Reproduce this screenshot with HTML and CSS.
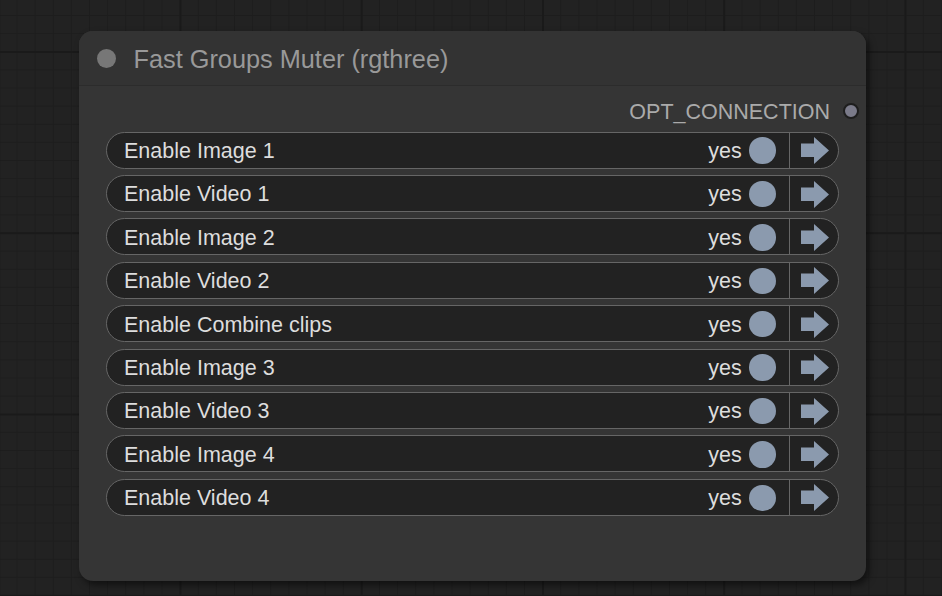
FILE: index.html
```html
<!DOCTYPE html>
<html>
<head>
<meta charset="utf-8">
<link rel="stylesheet" href="styles.css">
</head>
<body>
<div class="canvas">
  <div class="node">
    <div class="title">
      <span class="title-dot"></span>
      <span class="title-text">Fast Groups Muter (rgthree)</span>
    </div>
    <div class="output-row">
      <span class="output-label">OPT_CONNECTION</span>
      <span class="output-dot"></span>
    </div>
    <div class="rows">
      <div class="row"><span class="label">Enable Image 1</span><span class="value">yes</span><span class="toggle"></span><span class="divider"></span><span class="arrow-cell"><svg class="arrow" width="28" height="27" viewBox="0 0 28 27"><polygon points="0,6.5 13,6.5 13,0 28,13.5 13,27 13,20 0,20"/></svg></span></div>
      <div class="row"><span class="label">Enable Video 1</span><span class="value">yes</span><span class="toggle"></span><span class="divider"></span><span class="arrow-cell"><svg class="arrow" width="28" height="27" viewBox="0 0 28 27"><polygon points="0,6.5 13,6.5 13,0 28,13.5 13,27 13,20 0,20"/></svg></span></div>
      <div class="row"><span class="label">Enable Image 2</span><span class="value">yes</span><span class="toggle"></span><span class="divider"></span><span class="arrow-cell"><svg class="arrow" width="28" height="27" viewBox="0 0 28 27"><polygon points="0,6.5 13,6.5 13,0 28,13.5 13,27 13,20 0,20"/></svg></span></div>
      <div class="row"><span class="label">Enable Video 2</span><span class="value">yes</span><span class="toggle"></span><span class="divider"></span><span class="arrow-cell"><svg class="arrow" width="28" height="27" viewBox="0 0 28 27"><polygon points="0,6.5 13,6.5 13,0 28,13.5 13,27 13,20 0,20"/></svg></span></div>
      <div class="row"><span class="label">Enable Combine clips</span><span class="value">yes</span><span class="toggle"></span><span class="divider"></span><span class="arrow-cell"><svg class="arrow" width="28" height="27" viewBox="0 0 28 27"><polygon points="0,6.5 13,6.5 13,0 28,13.5 13,27 13,20 0,20"/></svg></span></div>
      <div class="row"><span class="label">Enable Image 3</span><span class="value">yes</span><span class="toggle"></span><span class="divider"></span><span class="arrow-cell"><svg class="arrow" width="28" height="27" viewBox="0 0 28 27"><polygon points="0,6.5 13,6.5 13,0 28,13.5 13,27 13,20 0,20"/></svg></span></div>
      <div class="row"><span class="label">Enable Video 3</span><span class="value">yes</span><span class="toggle"></span><span class="divider"></span><span class="arrow-cell"><svg class="arrow" width="28" height="27" viewBox="0 0 28 27"><polygon points="0,6.5 13,6.5 13,0 28,13.5 13,27 13,20 0,20"/></svg></span></div>
      <div class="row"><span class="label">Enable Image 4</span><span class="value">yes</span><span class="toggle"></span><span class="divider"></span><span class="arrow-cell"><svg class="arrow" width="28" height="27" viewBox="0 0 28 27"><polygon points="0,6.5 13,6.5 13,0 28,13.5 13,27 13,20 0,20"/></svg></span></div>
      <div class="row"><span class="label">Enable Video 4</span><span class="value">yes</span><span class="toggle"></span><span class="divider"></span><span class="arrow-cell"><svg class="arrow" width="28" height="27" viewBox="0 0 28 27"><polygon points="0,6.5 13,6.5 13,0 28,13.5 13,27 13,20 0,20"/></svg></span></div>
    </div>
  </div>
</div>
</body>
</html>
```

FILE: styles.css
```css
html, body {
  margin: 0;
  padding: 0;
}

body {
  font-family: "Liberation Sans", Arial, sans-serif;
  background: #222;
}

.canvas {
  width: 942px;
  height: 596px;
  box-sizing: border-box;
  padding: 31px 0 0 79px;
  overflow: hidden;
  background-color: #222;
  background-image:
    linear-gradient(to right, #1a1a1a 2px, transparent 2px),
    linear-gradient(to bottom, #1a1a1a 2px, transparent 2px),
    linear-gradient(to right, #1d1d1d 1px, transparent 1px),
    linear-gradient(to bottom, #1d1d1d 1px, transparent 1px);
  background-size:
    181.25px 181.25px,
    181.25px 181.25px,
    18.125px 18.125px,
    18.125px 18.125px;
  background-position:
    179.5px 51px,
    179.5px 51px,
    16.5px 15px,
    16.5px 15px;
}

.node {
  width: 787px;
  height: 550px;
  background: #353535;
  border-radius: 14px;
  box-shadow: 3px 4px 7px rgba(0, 0, 0, 0.5);
  display: flex;
  flex-direction: column;
}

.title {
  height: 54px;
  border-bottom: 1px solid #2c2c2c;
  background: #333;
  border-radius: 14px 14px 0 0;
  display: flex;
  align-items: center;
  padding-left: 17.5px;
}

.title-dot {
  width: 19px;
  height: 19px;
  border-radius: 50%;
  background: #777;
  flex: none;
  margin-top: 1px;
}

.title-text {
  margin-left: 18px;
  padding-top: 3px;
  font-size: 25.3px;
  color: #999;
  white-space: nowrap;
}

.output-row {
  height: 36px;
  margin-top: 7px;
  display: flex;
  align-items: center;
  justify-content: flex-end;
  padding-right: 7.5px;
}

.output-label {
  font-size: 21.5px;
  color: #aaa;
  white-space: nowrap;
  padding-top: 3px;
}

.output-dot {
  width: 12px;
  height: 12px;
  border-radius: 50%;
  background: #7b7b8a;
  border: 2px solid #1e1e1e;
  margin-left: 12.5px;
  flex: none;
}

.rows {
  margin: 2.7px 27px 0 27px;
  display: flex;
  flex-direction: column;
  gap: 6.4px;
}

.row {
  height: 37px;
  box-sizing: border-box;
  border: 1px solid #666;
  border-radius: 18.5px;
  background: #222;
  display: flex;
  align-items: center;
  padding-left: 17px;
  color: #ddd;
  font-size: 21.5px;
}

.label {
  flex: 1;
  white-space: nowrap;
  padding-top: 2.5px;
}

.value {
  white-space: nowrap;
  padding-top: 2.5px;
}

.toggle {
  width: 26.4px;
  height: 26.4px;
  border-radius: 50%;
  background: #8b9aae;
  margin-left: 7.5px;
  margin-top: 1px;
  flex: none;
}

.divider {
  width: 1px;
  align-self: stretch;
  background: #666;
  margin-left: 13.3px;
  flex: none;
}

.arrow-cell {
  width: 48px;
  display: flex;
  align-items: center;
  justify-content: center;
  flex: none;
}

.arrow {
  display: block;
  fill: #8b9aae;
  margin-left: 1px;
  margin-top: 1px;
}
```
